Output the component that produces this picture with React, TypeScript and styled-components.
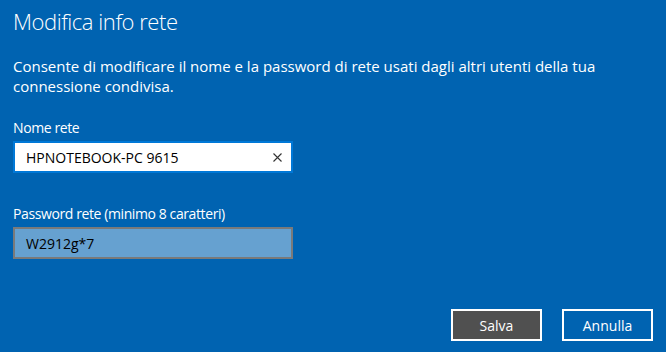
import React from "react";
import styled, { createGlobalStyle } from "styled-components";

const Global = createGlobalStyle`
  html, body { margin: 0; padding: 0; background: #0063b1; }
  body { width: 666px; height: 352px; overflow: hidden; font-family: "Open Sans", "Noto Sans", sans-serif; }
  * { box-sizing: border-box; }
`;

const Dialog = styled.div`
  width: 666px;
  height: 352px;
  padding: 4px 13px 11px 13px;
  display: flex;
  flex-direction: column;
  color: #ffffff;
`;

const Title = styled.h1`
  margin: 0;
  font-size: 22px;
  font-weight: 300;
  letter-spacing: -0.45px;
  line-height: 34px;
`;

const Description = styled.p`
  margin: 18px 0 0 0;
  font-size: 15px;
  line-height: 20px;
  width: 630px;
`;

const Field = styled.div<{ $top: number }>`
  margin-top: ${(p) => p.$top}px;
  display: flex;
  flex-direction: column;
  gap: 3px;
`;

const Label = styled.label`
  font-size: 14px;
  letter-spacing: -0.4px;
  line-height: 20px;
`;

const InputBox = styled.div<{ $variant: "active" | "disabled" }>`
  width: 280px;
  height: 32px;
  display: flex;
  align-items: center;
  padding: 0 9px 0 11px;
  border: 2px solid ${(p) => (p.$variant === "active" ? "#0078d7" : "#7a7a7a")};
  background: ${(p) => (p.$variant === "active" ? "#ffffff" : "#66a1d0")};
  color: #000000;
  font-size: 14px;
`;

const InputText = styled.span`
  flex: 1;
`;

const ClearIcon = styled.svg`
  width: 9px;
  height: 9px;
  display: block;
`;

const Footer = styled.div`
  margin-top: auto;
  display: flex;
  justify-content: flex-end;
  gap: 20px;
`;

const Button = styled.button<{ $primary?: boolean }>`
  width: 91px;
  height: 32px;
  border: 2px solid #ffffff;
  background: ${(p) => (p.$primary ? "#505050" : "#0063b1")};
  color: #ffffff;
  font-family: inherit;
  font-size: 14px;
  padding: 0;
`;

export default function App() {
  return (
    <>
      <Global />
      <Dialog>
        <Title>Modifica info rete</Title>
        <Description>
          Consente di modificare il nome e la password di rete usati dagli altri utenti della tua connessione condivisa.
        </Description>
        <Field $top={22}>
          <Label>Nome rete</Label>
          <InputBox $variant="active">
            <InputText>HPNOTEBOOK-PC 9615</InputText>
            <ClearIcon viewBox="0 0 9 9">
              <path d="M0.5 0.5 L8.5 8.5 M8.5 0.5 L0.5 8.5" stroke="#333" strokeWidth="1.1" fill="none" />
            </ClearIcon>
          </InputBox>
        </Field>
        <Field $top={31}>
          <Label>Password rete (minimo 8 caratteri)</Label>
          <InputBox $variant="disabled">
            <InputText>W2912g*7</InputText>
          </InputBox>
        </Field>
        <Footer>
          <Button $primary>Salva</Button>
          <Button>Annulla</Button>
        </Footer>
      </Dialog>
    </>
  );
}
